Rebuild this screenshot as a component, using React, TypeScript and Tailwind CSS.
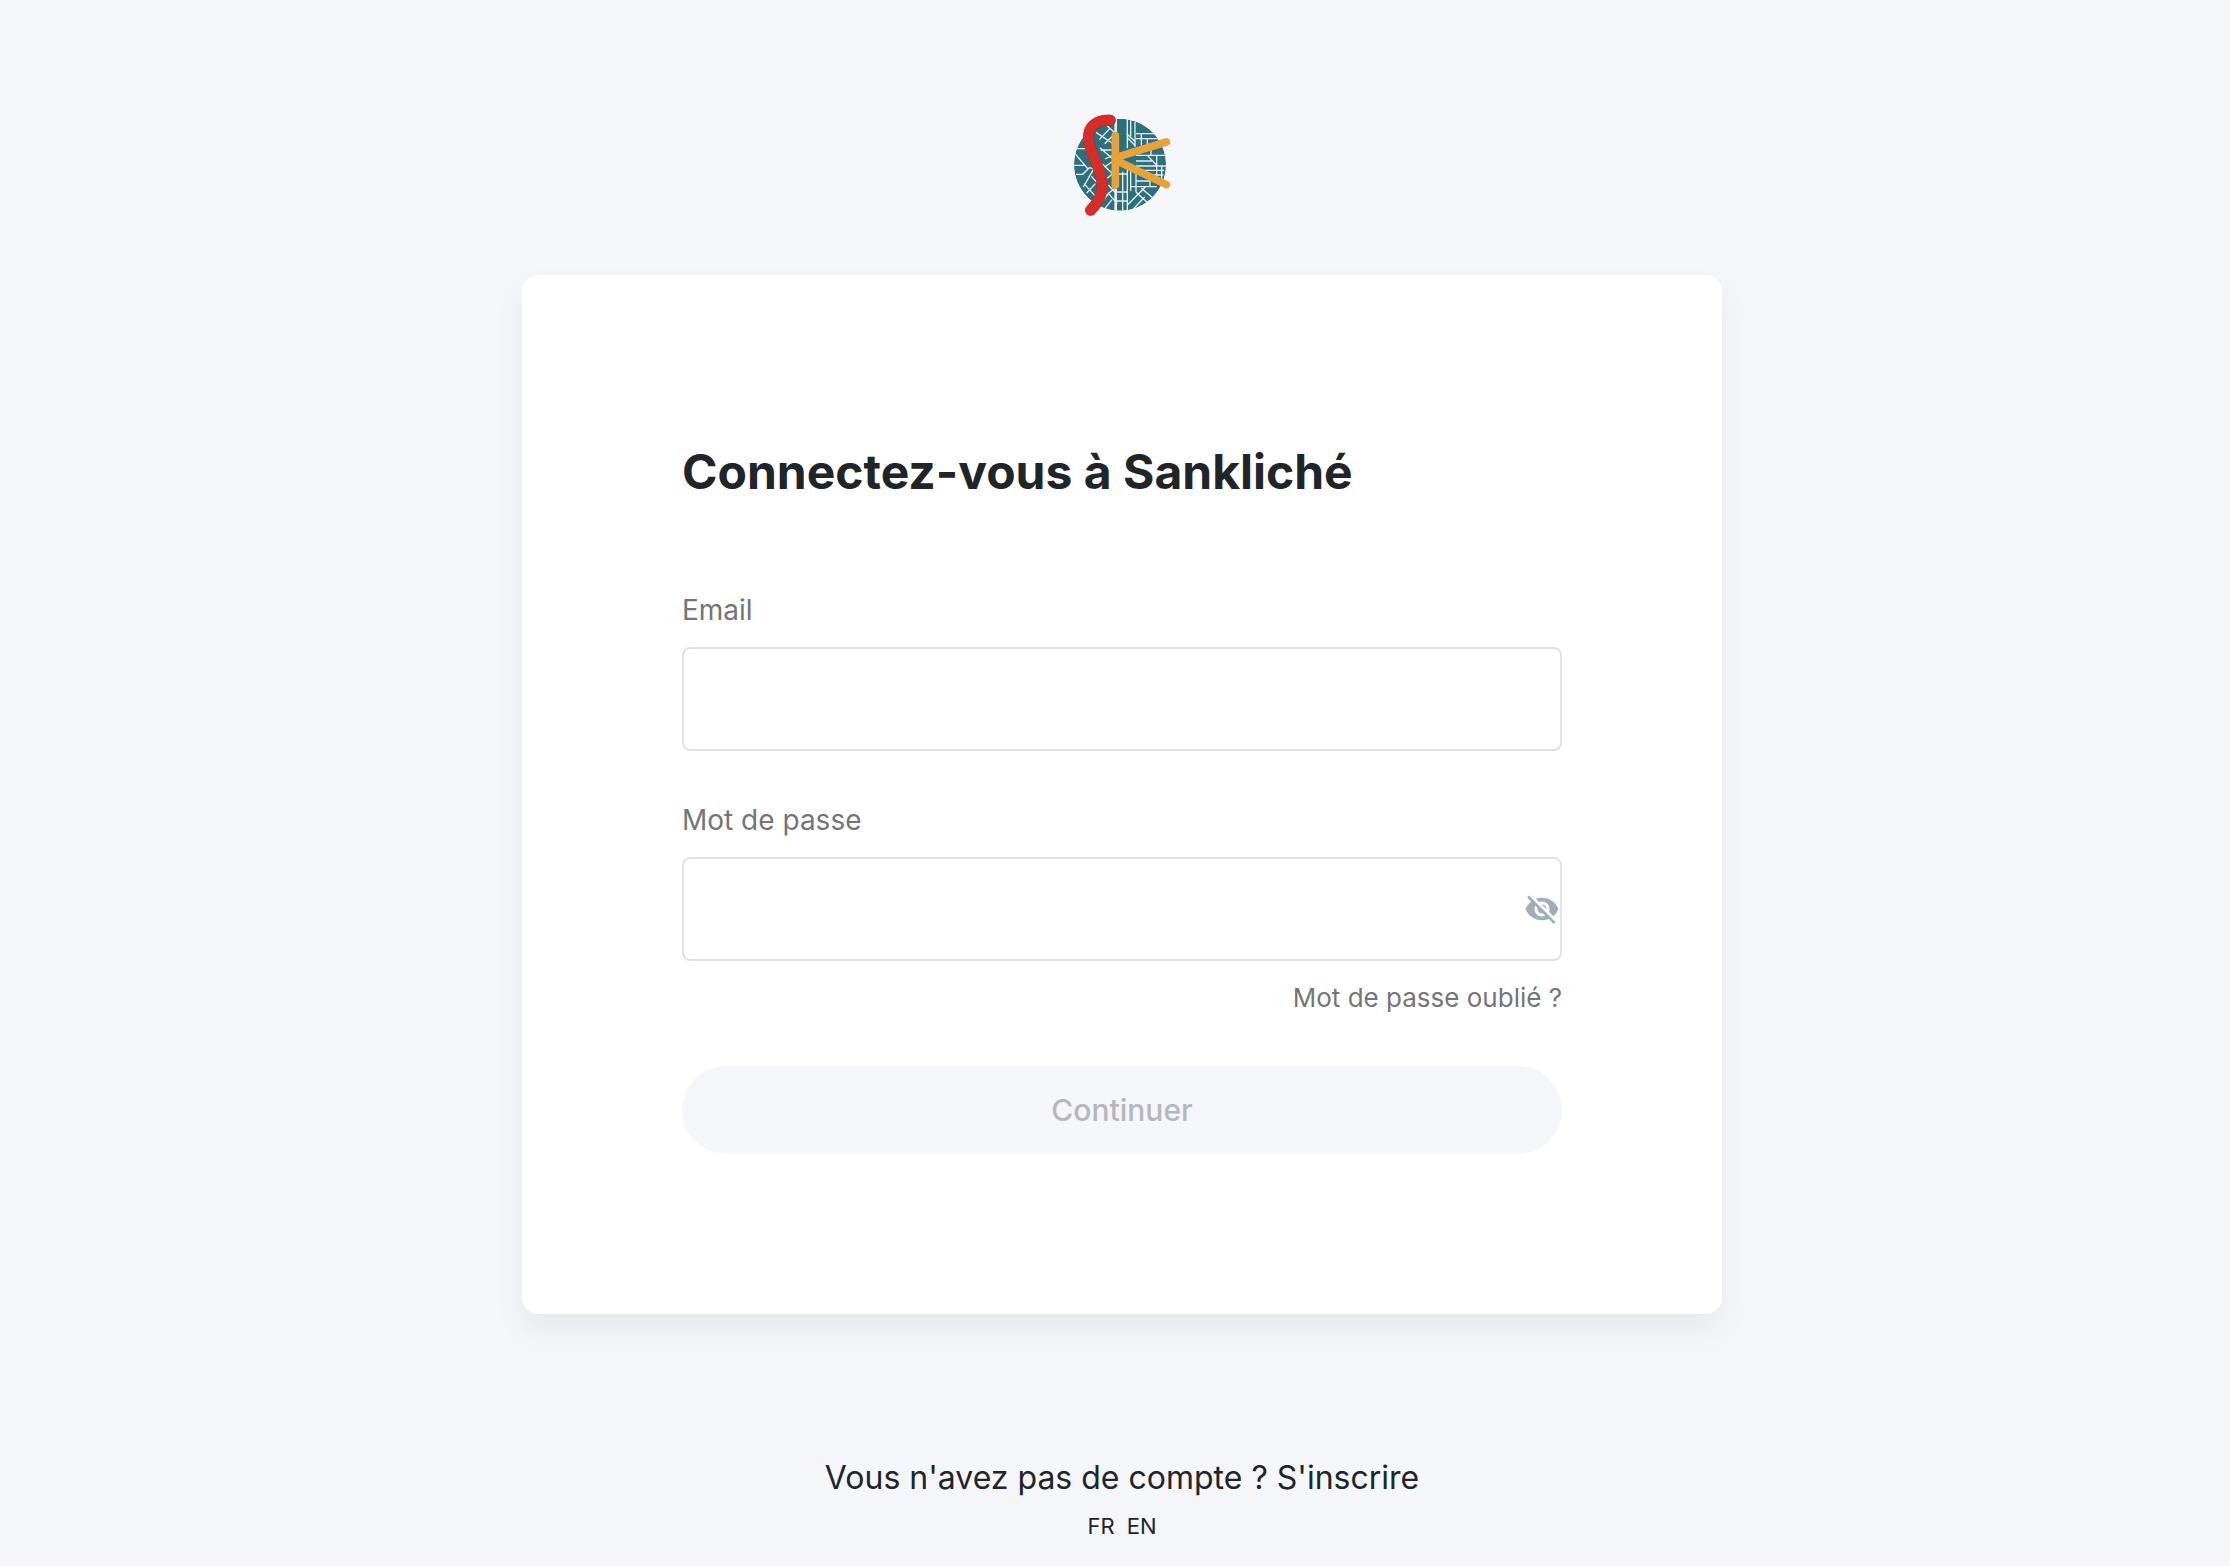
import { useState } from 'react';
import { MdVisibilityOff } from 'react-icons/md';

function Logo() {
  return (
    <svg viewBox="6 0 360 360" className="size-[120px]" role="img" aria-label="Sankliché">
      <defs>
        <clipPath id="globe">
          <circle cx="180" cy="179" r="138" />
        </clipPath>
      </defs>
      <g clipPath="url(#globe)">
        <circle cx="180" cy="179" r="138" fill="#2e6f7c" />
        <g stroke="#e6eff1" strokeWidth="4" fill="none">
          <path d="M167 40V320" strokeWidth="8" />
          <path d="M202 40V130M212 45V94M225 50V125M188 200V318M202 186V318M212 186V258M228 190V262" />
          <path d="M200 86L226 110M202 98L226 122M228 86H292M228 101H300M244 86V122M262 101V118" />
          <path d="M228 151H320M262 151L292 183M273 135V151M290 151V220M305 183V226M228 168H276M228 183H320M228 196H312M256 210H310" />
          <path d="M228 228H268M212 245H290M270 205V245M228 262L268 298M244 250L285 284M202 300L256 246M218 314L254 276M170 207H202M170 261H202M170 288H202" />
          <path d="M108 82L165 120M132 54L165 84M118 104L150 70M134 116L165 86M120 128L156 160M122 135H155M135 162L160 150" />
          <path d="M126 176L158 206M136 184L160 168M142 220L165 200" />
          <path d="M45 146L84 192M42 181H76M48 208H68L88 188L112 194M50 131H82M100 194L70 246M94 214L122 244M80 264L106 236M72 236L110 278" />
          <path d="M136 272L165 250M118 300L146 266L172 296M132 314L156 284M145 240L165 262" />
        </g>
      </g>
      <path
        d="M151 46C112 44 84 62 86 102C88 144 126 190 126 240C126 276 110 298 92 316"
        fill="none"
        stroke="#7c3b3c"
        strokeWidth="33"
        strokeLinecap="round"
      />
      <path
        d="M149 45C110 44 83 62 85 102C87 144 127 190 127 240C127 276 110 298 91 315"
        fill="none"
        stroke="#d72c27"
        strokeWidth="31"
        strokeLinecap="round"
      />
      <path
        d="M166 92V241M166 158L319 111M166 165L319 239"
        fill="none"
        stroke="#e6a33b"
        strokeWidth="23"
        strokeLinecap="round"
      />
    </svg>
  );
}

export default function App() {
  const [email, setEmail] = useState('');
  const [password, setPassword] = useState('');
  const [visible, setVisible] = useState(false);
  const field =
    'block h-[104px] w-full rounded-lg border-2 border-[#dfe3e8] bg-white px-6 text-[28px] text-[#212529] outline-none';

  return (
    <div className="flex min-h-screen flex-col items-center bg-[#f4f6fa] pt-[105px] pl-3.5 font-['Inter',sans-serif] text-[#212529]">
      <Logo />
      <main className="mt-[50px] w-full max-w-[1200px] rounded-2xl bg-white p-40 shadow-[0_16px_32px_rgba(0,0,0,0.06)]">
        <h1 className="mb-20 text-[48px] leading-[74px] font-bold">Connectez-vous à Sankliché</h1>
        <form onSubmit={(e) => e.preventDefault()}>
          <label htmlFor="email" className="mb-4 block text-[28px] leading-[42px] text-[#757575]">
            Email
          </label>
          <input id="email" type="email" className={field} value={email} onChange={(e) => setEmail(e.target.value)} />
          <label htmlFor="password" className="mt-12 mb-4 block text-[28px] leading-[42px] text-[#757575]">
            Mot de passe
          </label>
          <div className="relative">
            <input
              id="password"
              type={visible ? 'text' : 'password'}
              className={field}
              value={password}
              onChange={(e) => setPassword(e.target.value)}
            />
            <button
              type="button"
              aria-label="Afficher le mot de passe"
              onClick={() => setVisible(!visible)}
              className="absolute inset-y-0 right-0.5 flex items-center text-[#a0aebb]"
            >
              <MdVisibilityOff className="size-9" />
            </button>
          </div>
          <div className="mt-4 mb-12 flex justify-end">
            <a href="#" className="text-[26px] leading-[41px] text-[#757575]">
              Mot de passe oublié ?
            </a>
          </div>
          <button
            type="submit"
            disabled
            className="h-22 w-full rounded-full bg-[#f4f6fa] text-[30px] font-medium text-[#b6b7ba]"
          >
            Continuer
          </button>
        </form>
      </main>
      <footer className="mt-35 flex flex-col items-center gap-2">
        <p className="text-[32px] leading-[48px]">
          Vous n'avez pas de compte ? <a href="#">S'inscrire</a>
        </p>
        <div className="flex gap-3 text-[22px] leading-[33px]">
          <button type="button">FR</button>
          <button type="button">EN</button>
        </div>
      </footer>
    </div>
  );
}
